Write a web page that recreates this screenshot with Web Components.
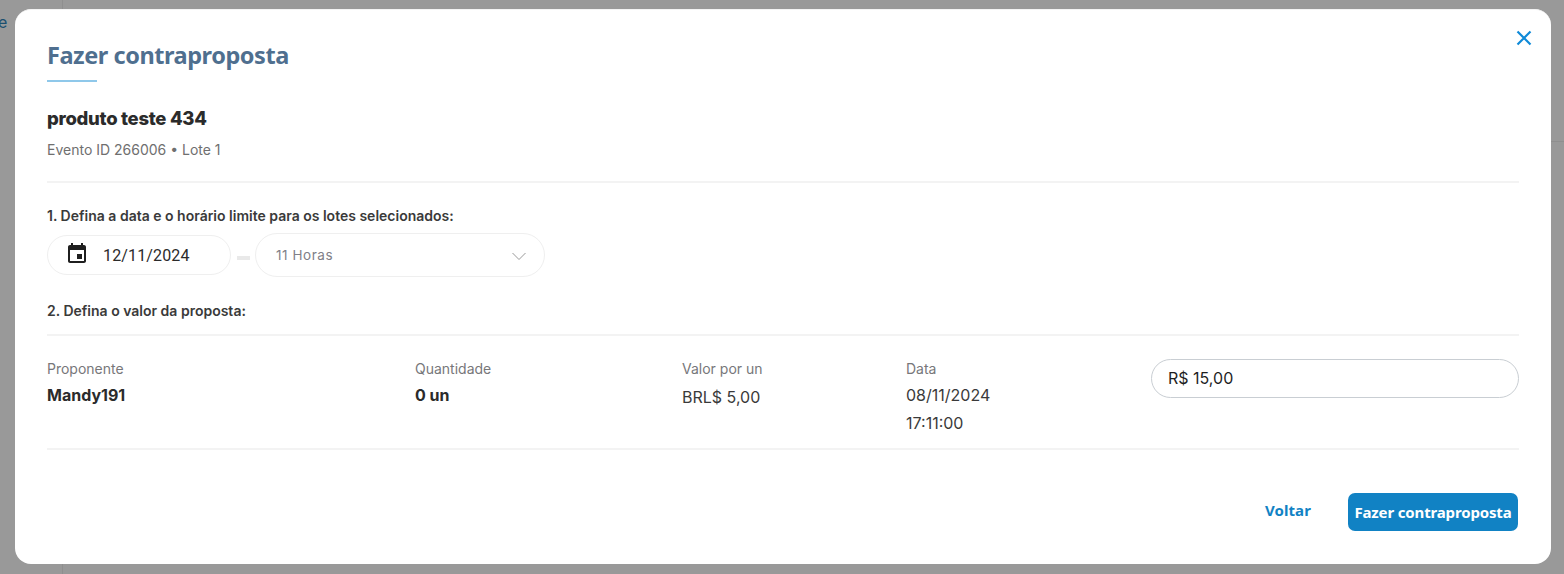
<!DOCTYPE html>
<html lang="pt-BR">
<head>
<meta charset="utf-8">
<title>Fazer contraproposta</title>
<style>
html, body { margin: 0; height: 100%; }
body { background: #999; overflow: hidden; font-family: "Inter", "Liberation Sans", sans-serif; }
</style>
</head>
<body>
<page-backdrop></page-backdrop>
<offer-modal heading="Fazer contraproposta">
  <offer-summary name="produto teste 434" meta="Evento ID 266006 • Lote 1"></offer-summary>
  <step-label>1. Defina a data e o horário limite para os lotes selecionados:</step-label>
  <deadline-fields date="12/11/2024" hour="11 Horas"></deadline-fields>
  <step-label class="second">2. Defina o valor da proposta:</step-label>
  <proposal-row></proposal-row>
  <modal-actions></modal-actions>
</offer-modal>

<script>
// Fundo escurecido atras do modal
class PageBackdrop extends HTMLElement {
  constructor() {
    super()
    this.attachShadow({ mode: "open" })
    this.shadowRoot.innerHTML = `
    <style>
      :host { position: absolute; inset: 0; display: block; }
      .line { position: absolute; left: 62px; top: 0; bottom: 0; width: 1px; background: #8f8f8f; }
      .rule { position: absolute; right: 0; top: 141px; width: 13px; height: 1px; background: #8f8f8f; }
      .letter { position: absolute; left: -2px; top: 12px; font: 16px "Inter", sans-serif; color: #1b5070; }
    </style>
    <div class="line"></div>
    <div class="rule"></div>
    <span class="letter">e</span>`
  }
}

class OfferModal extends HTMLElement {
  constructor() {
    super()
    this.attachShadow({ mode: "open" })
    this.shadowRoot.innerHTML = `
    <style>
      :host {
        position: absolute; left: 15px; top: 9px; width: 1536px; height: 555px;
        box-sizing: border-box; padding: 28px 32px 0; display: block;
        background: #fff; border-radius: 16px; border-top: 1px solid #f4f4f4;
      }
      h2 {
        margin: 0; font: 700 23.5px/34px "Noto Sans", "Open Sans", sans-serif; color: #4f6f8f;
        letter-spacing: -0.45px;
      }
      .bar { width: 50px; height: 2px; background: #8fc8ea; margin-top: 8px; }
      button {
        position: absolute; right: 18px; top: 19px; width: 18px; height: 18px;
        padding: 0; border: 0; background: none; cursor: pointer;
      }
      svg { display: block; }
    </style>
    <h2></h2>
    <div class="bar"></div>
    <button aria-label="Fechar">
      <svg width="18" height="18" viewBox="0 0 18 18" fill="none" stroke="#0f8ad8" stroke-width="2.2">
        <path d="M2.5 2.5 15.5 15.5M15.5 2.5 2.5 15.5"/>
      </svg>
    </button>
    <slot></slot>`
    this.shadowRoot.querySelector("h2").textContent = this.getAttribute("heading")
  }
}

class OfferSummary extends HTMLElement {
  constructor() {
    super()
    this.attachShadow({ mode: "open" })
    this.shadowRoot.innerHTML = `
    <style>
      :host { display: block; margin-top: 24px; padding-bottom: 21px; border-bottom: 2px solid #f3f3f3; }
      .name { font: 800 18.5px/24px "Inter", sans-serif; color: #2b2b2b; letter-spacing: -0.3px; }
      .meta { margin-top: 10px; font: 400 14px/20px "Inter", sans-serif; color: #6f6f6f; }
    </style>
    <div class="name"></div>
    <div class="meta"></div>`
    this.shadowRoot.querySelector(".name").textContent = this.getAttribute("name")
    this.shadowRoot.querySelector(".meta").textContent = this.getAttribute("meta")
  }
}

class StepLabel extends HTMLElement {
  constructor() {
    super()
    this.attachShadow({ mode: "open" })
    this.shadowRoot.innerHTML = `
    <style>
      :host { display: block; margin-top: 24px; font: 600 14px/18px "Inter", sans-serif; color: #3a3a3a; }
      :host(.second) { margin-top: 25px; padding-bottom: 14px; border-bottom: 2px solid #f3f3f3; }
    </style>
    <slot></slot>`
  }
}

class DeadlineFields extends HTMLElement {
  constructor() {
    super()
    this.attachShadow({ mode: "open" })
    this.shadowRoot.innerHTML = `
    <style>
      :host { display: flex; align-items: center; margin-top: 8px; height: 44px; }
      .pill { box-sizing: border-box; background: #fff; border: 1px solid #efefef; border-radius: 22px; display: flex; align-items: center; }
      .date { width: 184px; height: 40px; padding-left: 17px; gap: 14px; font: 400 16px "Roboto", sans-serif; letter-spacing: 0.15px; color: #2b2b2b; }
      .dash { width: 13px; height: 4px; background: #e9e9e9; margin: 6px 5px 0 6px; }
      .hour { width: 290px; height: 44px; padding: 0 17px 0 20px; justify-content: space-between; font: 400 13.5px "Inter", sans-serif; letter-spacing: 0.55px; color: #808088; }
      svg { display: block; }
      .hour svg { margin-top: 2px; }
    </style>
    <div class="pill date">
      <svg width="24" height="24" viewBox="0 0 24 24" fill="#1f1f1f" style="margin-top:-2px">
        <path d="M17 12h-5v5h5v-5zM16 1v2H8V1H6v2H5c-1.11 0-1.99.9-1.99 2L3 19c0 1.1.89 2 2 2h14c1.1 0 2-.9 2-2V5c0-1.1-.9-2-2-2h-1V1h-2zm3 18H5V8h14v11z"/>
      </svg>
      <span class="d"></span>
    </div>
    <div class="dash"></div>
    <div class="pill hour">
      <span class="h"></span>
      <svg width="16" height="9" viewBox="0 0 16 9" fill="none" stroke="#999" stroke-width="1">
        <path d="M1.5 1 8 7.5 14.5 1"/>
      </svg>
    </div>`
    this.shadowRoot.querySelector(".d").textContent = this.getAttribute("date")
    this.shadowRoot.querySelector(".h").textContent = this.getAttribute("hour")
  }
}

class ProposalRow extends HTMLElement {
  constructor() {
    super()
    this.attachShadow({ mode: "open" })
    this.shadowRoot.innerHTML = `
    <style>
      :host {
        display: grid; grid-template-columns: 368px 267px 224px 245px 368px;
        padding: 24px 0 12px; height: 76px;
        border-bottom: 2px solid #f3f3f3; font-family: "Inter", sans-serif;
      }
      .label { margin-top: -1px; font: 400 14px/20px "Inter", sans-serif; color: #77777a; }
      .strong { margin-top: 6px; font: 700 16px/20px "Inter", sans-serif; color: #2b2b2b; }
      .plain { margin-top: 7px; font: 400 16px/22px "Inter", sans-serif; color: #3a3a3a; }
      .stamp { margin-top: 2px; font: 400 16px/28px "Inter", sans-serif; color: #3a3a3a; }
      .amount {
        box-sizing: border-box; height: 39px; margin-top: -1px; border: 1px solid #c9ced3; border-radius: 20px;
        padding: 0 16px 1px; display: flex; align-items: center;
        font: 400 16px "Inter", sans-serif; color: #1f1f1f;
      }
    </style>
    <div><div class="label">Proponente</div><div class="strong">Mandy191</div></div>
    <div><div class="label">Quantidade</div><div class="strong">0 un</div></div>
    <div><div class="label">Valor por un</div><div class="plain">BRL$ 5,00</div></div>
    <div><div class="label">Data</div><div class="stamp">08/11/2024<br>17:11:00</div></div>
    <div class="amount">R$ 15,00</div>`
  }
}

class ModalActions extends HTMLElement {
  constructor() {
    super()
    this.attachShadow({ mode: "open" })
    this.shadowRoot.innerHTML = `
    <style>
      :host { display: flex; justify-content: flex-end; align-items: center; gap: 37px; margin-top: 43px; padding-right: 1px; }
      button { border: 0; background: none; padding: 0; cursor: pointer; font: 700 15px "Noto Sans", sans-serif; letter-spacing: -0.15px; }
      .back { color: #1182c4; margin-top: -5px; letter-spacing: 0.1px; }
      .main { width: 170px; height: 38px; border-radius: 7px; background: #1182c4; color: #fff; }
    </style>
    <button class="back">Voltar</button>
    <button class="main">Fazer contraproposta</button>`
  }
}

customElements.define("page-backdrop", PageBackdrop)
customElements.define("offer-modal", OfferModal)
customElements.define("offer-summary", OfferSummary)
customElements.define("step-label", StepLabel)
customElements.define("deadline-fields", DeadlineFields)
customElements.define("proposal-row", ProposalRow)
customElements.define("modal-actions", ModalActions)
</script>
</body>
</html>
